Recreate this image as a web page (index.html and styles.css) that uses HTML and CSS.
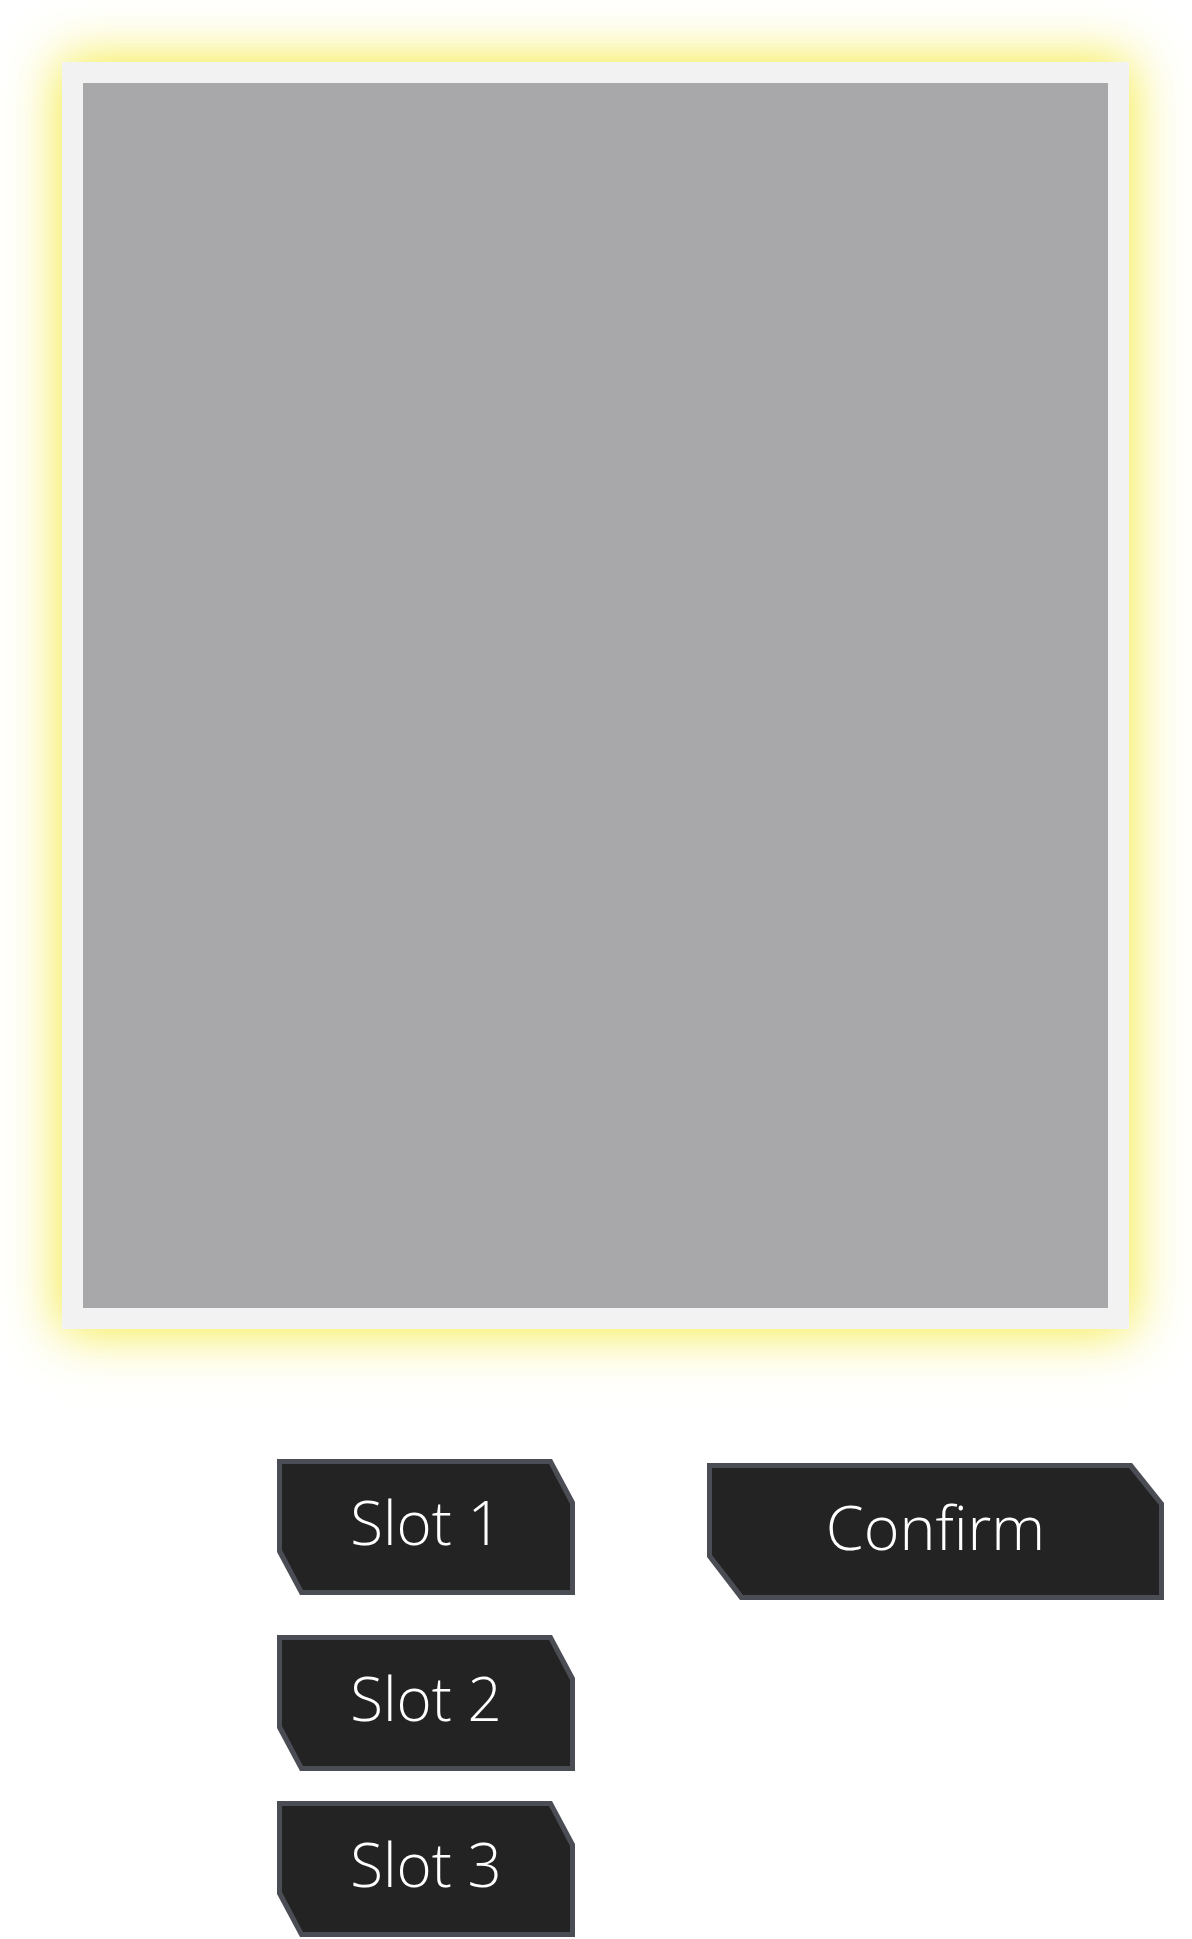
FILE: index.html
```html
<!DOCTYPE html>
<html>
<head>
<meta charset="utf-8">
<link rel="stylesheet" href="styles.css">
</head>
<body>
<div class="frame">
  <div class="canvas"></div>
</div>
<div class="controls">
  <div class="slots">
    <button class="btn slot slot-first"><span class="btn-inner">Slot 1</span></button>
    <button class="btn slot"><span class="btn-inner">Slot 2</span></button>
    <button class="btn slot"><span class="btn-inner">Slot 3</span></button>
  </div>
  <button class="btn confirm"><span class="btn-inner">Confirm</span></button>
</div>
</body>
</html>
```
FILE: styles.css
```css
html, body {
  margin: 0;
  padding: 0;
  background: #ffffff;
}
body {
  font-family: "Open Sans", "Liberation Sans", sans-serif;
  padding: 62px 0 0 62px;
}
.frame {
  width: 1025px;
  height: 1225px;
  padding: 21px;
  background: #f2f2f2;
  box-shadow: 0 0 50px 2px rgba(242, 230, 20, 0.85);
}
.canvas {
  width: 100%;
  height: 100%;
  background: #a8a8ab;
}
.controls {
  display: flex;
  align-items: flex-start;
  margin-top: 130px;
  padding-left: 215px;
  gap: 132px;
}
.slots {
  display: flex;
  flex-direction: column;
  gap: 30px;
}
.btn {
  display: block;
  border: none;
  padding: 5px;
  margin: 0;
  background: #4a4d54;
  font-family: "Open Sans", "Liberation Sans", sans-serif;
  font-weight: 300;
  color: #ffffff;
  cursor: pointer;
}
.slot-first {
  margin-bottom: 10px;
}
.btn-inner {
  display: flex;
  align-items: center;
  justify-content: center;
  box-sizing: border-box;
  width: 100%;
  height: 100%;
  padding-bottom: 10px;
  background: #232323;
}
.slot {
  width: 298px;
  height: 136px;
  font-size: 60px;
  clip-path: polygon(0 0, calc(100% - 23px) 0, 100% 43px, 100% 100%, 23px 100%, 0 calc(100% - 43px));
}
.slot .btn-inner {
  clip-path: polygon(0 0, calc(100% - 21px) 0, 100% 40px, 100% 100%, 21px 100%, 0 calc(100% - 40px));
}
.confirm {
  margin-top: 4px;
  width: 457px;
  height: 137px;
  font-size: 61px;
  clip-path: polygon(0 0, calc(100% - 32px) 0, 100% 40px, 100% 100%, 33px 100%, 0 calc(100% - 43px));
}
.confirm .btn-inner {
  clip-path: polygon(0 0, calc(100% - 30px) 0, 100% 37px, 100% 100%, 31px 100%, 0 calc(100% - 40px));
}
```
